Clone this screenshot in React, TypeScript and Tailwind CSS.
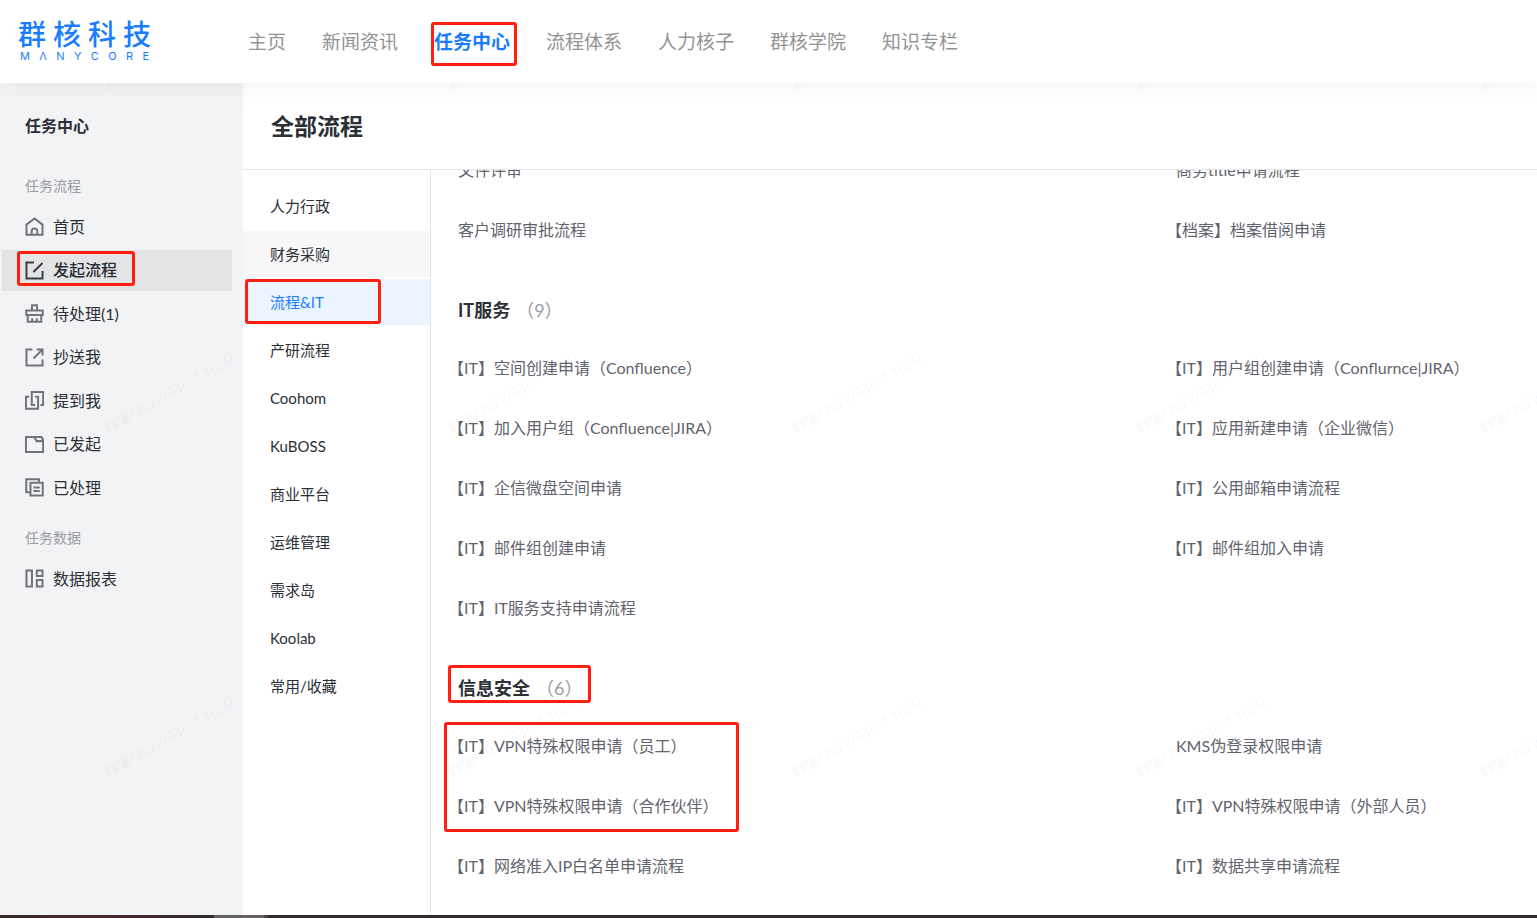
import React from "react";
import clsx from "clsx";

const NAV_ITEMS = [
  "主页",
  "新闻资讯",
  "任务中心",
  "流程体系",
  "人力核子",
  "群核学院",
  "知识专栏",
];

const CATEGORIES = [
  "人力行政",
  "财务采购",
  "流程&IT",
  "产研流程",
  "Coohom",
  "KuBOSS",
  "商业平台",
  "运维管理",
  "需求岛",
  "Koolab",
  "常用/收藏",
];

const IT_SERVICES = [
  "【IT】空间创建申请（Confluence）",
  "【IT】用户组创建申请（Conflurnce|JIRA）",
  "【IT】加入用户组（Confluence|JIRA）",
  "【IT】应用新建申请（企业微信）",
  "【IT】企信微盘空间申请",
  "【IT】公用邮箱申请流程",
  "【IT】邮件组创建申请",
  "【IT】邮件组加入申请",
  "【IT】IT服务支持申请流程",
];

const SECURITY = [
  "【IT】VPN特殊权限申请（员工）",
  "KMS伪登录权限申请",
  "【IT】VPN特殊权限申请（合作伙伴）",
  "【IT】VPN特殊权限申请（外部人员）",
  "【IT】网络准入IP白名单申请流程",
  "【IT】数据共享申请流程",
];

const ICONS = {
  home: "M1.4 7.2 9 1.4l7.6 5.8V16.8H1.4zM6.3 16.8v-3.2a2.7 2.7 0 0 1 5.4 0v3.2",
  create: "M8.5 1.4H1.4v15.2h15.2V9.5M8 10.5l8.6-8.6",
  todo: "M6.6 6.2V1.2h4.8v5M1.2 10.4V6.2h15.6v4.2zM2.6 10.4v6.4h12.8v-6.4M6.8 17v-3.4M11.2 17v-3.4",
  copy: "M7 1.4H1.4v15.2h15.2V11M8 10l8.2-8.2M11 1.4h5.6V7",
  mention: "M9.6 13.2H6.4V1h10.8v12.2h-2.6M9.6 5.4h2.8v11.4H.9V5.4h3",
  started: "M.9 16.2V1.8h14.6l1.7 2.8v11.6zM8.6 1.8l2.4 4h6.2",
  done: "M13.2 4V1.2H1.2v12.4h3.4M5.2 4.6h11.6v12H5.2zM8 8.9h6M8 12.3h6",
  report: "M1.4 1.4h5.2v15.2H1.4zM11.2 1.4h5.4v5.2h-5.4zM11.2 10.4h5.4v6.2h-5.4z",
};

type IconName = keyof typeof ICONS;

const TASK_ITEMS: { icon: IconName; label: string }[] = [
  { icon: "home", label: "首页" },
  { icon: "create", label: "发起流程" },
  { icon: "todo", label: "待处理(1)" },
  { icon: "copy", label: "抄送我" },
  { icon: "mention", label: "提到我" },
  { icon: "started", label: "已发起" },
  { icon: "done", label: "已处理" },
];

// red frame laid over the steps the reader has to click
const Mark = ({ className }: { className: string }) => (
  <span
    aria-hidden="true"
    className={clsx(
      "pointer-events-none absolute z-10 rounded-[3px] border-3 border-[#ff1e10]",
      className
    )}
  />
);

const Logo = () => (
  <a href="#" className="block w-[133px] pb-0.5 text-[#1a7dff]">
    <span className="flex justify-between text-[28px] leading-7 font-medium">
      {["群", "核", "科", "技"].map((char) => (
        <span key={char}>{char}</span>
      ))}
    </span>
    <span className="mt-0.5 flex justify-between px-0.5 font-[Inter] text-[11px] leading-3">
      {["M", "Λ", "N", "Y", "C", "O", "R", "E"].map((char) => (
        <span key={char}>{char}</span>
      ))}
    </span>
  </a>
);

const SideItem = ({
  icon,
  label,
  active = false,
}: {
  icon: IconName;
  label: string;
  active?: boolean;
}) => (
  <a
    href="#"
    className={clsx(
      "relative mr-[11px] ml-0.5 flex h-[41px] items-center gap-[9px] pl-[23px] text-base text-[#2b2f36]",
      active && "bg-[#e3e4e6] font-medium"
    )}
  >
    <svg
      viewBox="0 0 18 18"
      className={clsx(
        "h-[19px] w-[19px]",
        active ? "text-[#3b3e43]" : "text-[#707479]"
      )}
      fill="none"
      stroke="currentColor"
      strokeWidth="1.9"
    >
      <path d={ICONS[icon]} />
    </svg>
    {label}
    {active && <Mark className="top-px left-[15px] h-[35px] w-[118px]" />}
  </a>
);

const ProcessList = ({ items }: { items: string[] }) => (
  <ul className="grid grid-cols-[2fr_1fr]">
    {items.map((item) => (
      <li key={item} className="flex h-15 items-center">
        <a
          href="#"
          className={clsx(
            "text-base whitespace-nowrap text-[#5f646d]",
            item.startsWith("【") && "-ml-2.5"
          )}
        >
          {item}
        </a>
      </li>
    ))}
  </ul>
);

const SectionTitle = ({
  title,
  count,
  marked = false,
}: {
  title: string;
  count: number;
  marked?: boolean;
}) => (
  <div className="relative flex h-[78px] items-center pt-[22px] text-lg">
    <h2 className="font-bold text-[#2b2f36]">{title}</h2>
    <span className="ml-1.5 text-[#9a9ea5]">（{count}）</span>
    {marked && <Mark className="top-[27px] -left-2.5 h-[38px] w-[143px]" />}
  </div>
);

const Watermark = () => (
  <div
    aria-hidden="true"
    className="pointer-events-none absolute inset-0 grid auto-rows-[344px] grid-cols-[repeat(5,344px)] overflow-hidden"
  >
    {Array.from({ length: 15 }, (_, index) => (
      <div key={index} className="pt-[72px] pl-[112px]">
        <span className="block w-max origin-bottom-left -rotate-30 font-['Open_Sans','Noto_Sans_CJK_SC',sans-serif] text-sm leading-6 font-semibold text-black/4">
          时诺/2022/03/17 10:32
        </span>
      </div>
    ))}
  </div>
);

export default function App() {
  return (
    <div className="relative flex h-screen flex-col overflow-hidden bg-white font-['Lato','Noto_Sans_CJK_SC',sans-serif]">
      <header className="relative z-20 flex h-[83px] shrink-0 items-center bg-white pl-[18px] shadow-[0_4px_24px_rgba(0,0,0,0.05)]">
        <Logo />
        <nav className="ml-[97px] flex gap-9 pt-0.5 text-[19px] whitespace-nowrap text-[#939393]">
          {NAV_ITEMS.map((item) => (
            <a
              key={item}
              href="#"
              className={clsx(
                "relative",
                item === "任务中心" && "font-bold text-[#1a7dff]"
              )}
            >
              {item}
              {item === "任务中心" && (
                <Mark className="-top-1.5 -left-[3px] h-11 w-[86px]" />
              )}
            </a>
          ))}
        </nav>
      </header>

      <div className="flex min-h-0 flex-1">
        <aside className="w-[243px] shrink-0 bg-[#f2f3f5]">
          <h2 className="pt-[31px] pl-[25px] text-base font-bold text-[#2b2f36]">
            任务中心
          </h2>
          <p className="mt-[38px] pl-[25px] text-sm text-[#989ca3]">任务流程</p>
          <nav className="mt-2.5 flex h-[302px] flex-col justify-between">
            {TASK_ITEMS.map((item) => (
              <SideItem
                key={item.label}
                {...item}
                active={item.icon === "create"}
              />
            ))}
          </nav>
          <p className="mt-5 pl-[25px] text-sm text-[#989ca3]">任务数据</p>
          <nav className="mt-2.5">
            <SideItem icon="report" label="数据报表" />
          </nav>
        </aside>

        <main className="flex min-w-0 flex-1 flex-col">
          <div className="flex h-[87px] shrink-0 items-center border-b border-[#e3e4e6] pl-7">
            <h1 className="text-[23px] font-bold text-[#2b2f36]">全部流程</h1>
          </div>
          <div className="flex min-h-0 flex-1">
            <nav className="flex w-[188px] shrink-0 flex-col gap-0.5 border-r border-[#e3e4e6] pt-[13px]">
              {CATEGORIES.map((item) => (
                <a
                  key={item}
                  href="#"
                  className={clsx(
                    "relative flex h-[46px] items-center pl-[27px] text-[15px]",
                    item === "流程&IT"
                      ? "bg-[#ebf4ff] text-[#1a7dff]"
                      : "text-[#2b2f36]",
                    item === "财务采购" && "bg-[#f7f7f7]"
                  )}
                >
                  {item}
                  {item === "流程&IT" && (
                    <Mark className="top-0 left-0.5 h-[45px] w-[136px]" />
                  )}
                </a>
              ))}
            </nav>

            <div className="min-w-0 flex-1 overflow-hidden pr-0.5 pl-[27px]">
              <div className="-mt-[30px]">
                <ProcessList
                  items={[
                    "文件评审",
                    "商务title申请流程",
                    "客户调研审批流程",
                    "【档案】档案借阅申请",
                  ]}
                />
                <SectionTitle title="IT服务" count={9} />
                <ProcessList items={IT_SERVICES} />
                <SectionTitle title="信息安全" count={6} marked />
                <div className="relative">
                  <ProcessList items={SECURITY} />
                  <Mark className="top-1.5 -left-3.5 h-[110px] w-[295px]" />
                </div>
              </div>
            </div>
          </div>
        </main>
      </div>

      <Watermark />

      <footer className="z-20 flex h-[3px] shrink-0 bg-[#2f292d]">
        <div className="w-[214px] bg-linear-to-r from-[#3a2c2c] via-[#4b2b30] to-[#322b30]" />
        <div className="w-[50px] bg-[#656165]" />
        <div className="w-1 bg-[#4b464a]" />
      </footer>
    </div>
  );
}
